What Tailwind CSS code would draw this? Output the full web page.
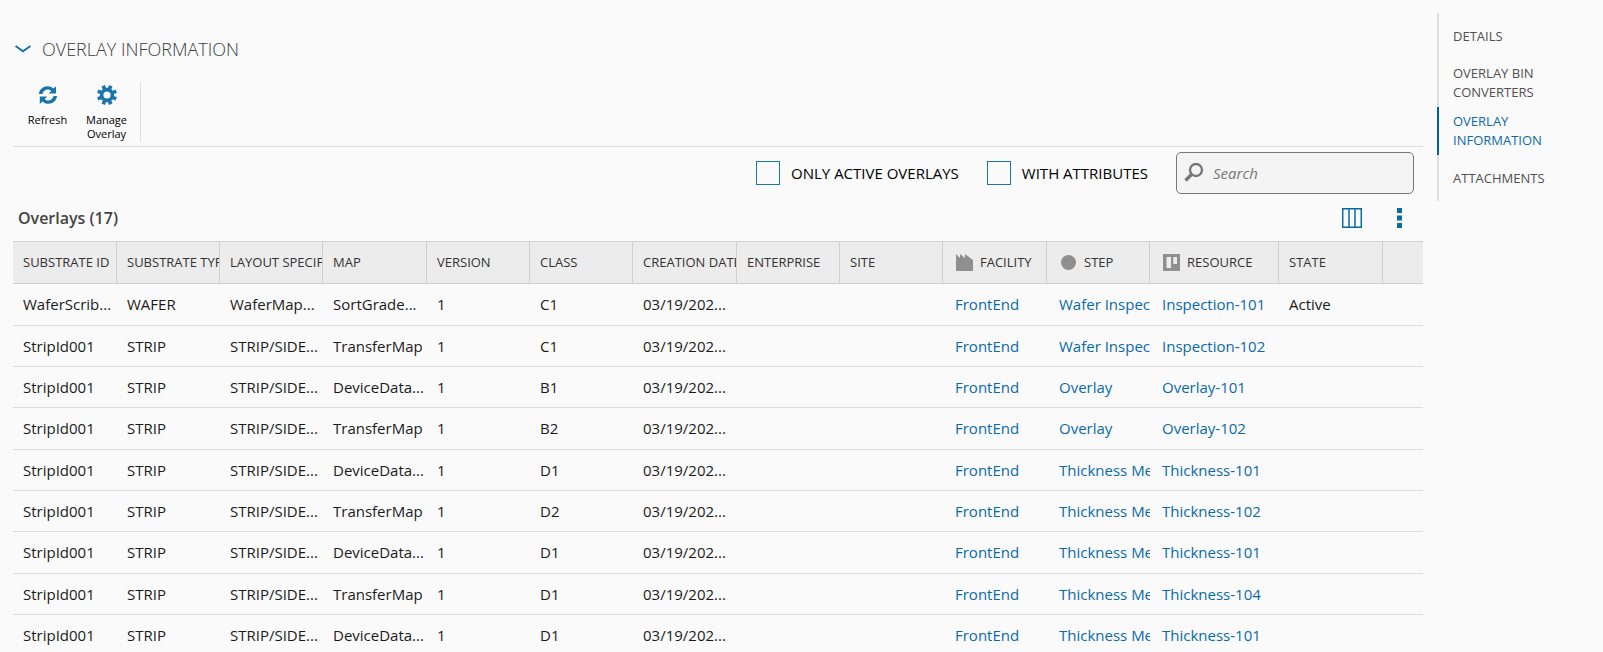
<!DOCTYPE html>
<html lang="en">

<head>
	<meta charset="UTF-8">
	<meta name="viewport" content="width=device-width, initial-scale=1.0">
	<title>Overlay Information</title>
	<script src="https://cdn.jsdelivr.net/npm/@tailwindcss/browser@4"></script>
</head>

<body class="h-screen overflow-hidden bg-[#fafafa] font-['Open_Sans','Noto_Sans',sans-serif] text-[15px] text-[#1a1a1a]">
	<div class="flex items-start pt-[13px] pl-[13px]">
		<main class="min-w-0 flex-1">
			<h1 class="mt-5">
				<button type="button" class="flex h-8 items-center gap-[11px] text-[18px] font-light text-[#3c3c3c]">
					<svg class="ml-[2px] w-4 h-2" viewBox="0 0 16 8" fill="none" stroke="#1272ac" stroke-width="2">
						<path d="M.5 1 8 6.3 15.5 1" />
					</svg>
					OVERLAY INFORMATION
				</button>
			</h1>

			<!-- toolbar -->
			<div class="mt-4 flex h-[66px] items-start border-b border-[#dedede] pt-px pl-[5px]">
				<div class="flex h-[60px] border-r border-[#dedede] pr-1">
					<button type="button" class="flex w-[59px] flex-col items-center pt-[3px] text-[11px] leading-[14px] text-black">
						<svg class="mb-2 size-5" viewBox="0 0 20 20" fill="#1b75ad">
							<path d="M1 9C1.3 4.500 5 1.300 9.600 1.300c2.300 0 4.300.8 5.900 2.300L18 1.200V8.600h-7.400l2.600-2.600C12.200 5 11 4.500 9.700 4.500 7.200 4.500 5.200 6.200 4.400 9z" />
							<path d="M19 11c-.3 4.500-4 7.700-8.600 7.700-2.300 0-4.300-.8-5.900-2.300L1.800 18.900v-7.500h7.400l-2.500 2.600c1 1 2.200 1.500 3.500 1.500 2.500 0 4.500-1.700 5.300-4.500z" />
						</svg>
						Refresh
					</button>
					<button type="button" class="flex w-[59px] flex-col items-center pt-[3px] text-[11px] leading-[14px] text-black">
						<svg class="mb-2 size-5" viewBox="0 0 20 20">
							<g stroke="#1b75ad" stroke-width="3.600">
								<path d="M10 0v20M0 10h20" transform="rotate(22.500 10 10)" />
								<path d="M10 0v20M0 10h20" transform="rotate(67.500 10 10)" />
							</g>
							<circle cx="10" cy="10" r="5.400" fill="#fafafa" stroke="#1b75ad" stroke-width="3.600" />
						</svg>
						<span>Manage<br>Overlay</span>
					</button>
				</div>
			</div>

			<!-- filters -->
			<div class="mt-[5px] flex h-[42px] items-center justify-end pr-[9px] text-black">
				<label class="mr-7 flex items-center gap-[11px]">
					<input type="checkbox" class="size-6 appearance-none border border-[#1b75ad] checked:bg-[#1b75ad]">
					ONLY ACTIVE OVERLAYS
				</label>
				<label class="mr-7 flex items-center gap-[11px]">
					<input type="checkbox" class="size-6 appearance-none border border-[#1b75ad] checked:bg-[#1b75ad]">
					WITH ATTRIBUTES
				</label>
				<label class="flex h-[42px] w-[238px] items-center gap-[9px] rounded-[5px] border border-[#777] bg-[#f4f4f4] px-[7px]">
					<svg class="size-5 shrink-0" viewBox="0 0 20 20" fill="none" stroke="#777">
						<circle cx="12" cy="7" r="6" stroke-width="2.400" />
						<path d="M8 11 1.500 17.500" stroke-width="3.400" />
					</svg>
					<input type="search" placeholder="Search" aria-label="Search" class="min-w-0 flex-1 outline-none placeholder:text-[#777] placeholder:italic">
				</label>
			</div>

			<div class="flex h-[47px] items-center pr-[21px] pl-[5px]">
				<h2 class="flex-1 text-[16px] font-semibold text-[#444]">Overlays (17)</h2>
				<button type="button" aria-label="Columns">
					<svg class="size-5" viewBox="0 0 20 20" fill="none" stroke="#0a6aa6" stroke-width="1.500">
						<path d="M.7.700h18.600v18.600H.7zM7 1v18M13 1v18" />
					</svg>
				</button>
				<button type="button" aria-label="More" class="ml-[35px]">
					<svg class="w-[5px] h-5" viewBox="0 0 5 20" fill="#0a6aa6">
						<path d="M0 0h5v5H0zM0 7.500h5v5H0zM0 15h5v5H0z" />
					</svg>
				</button>
			</div>

			<table class="w-full table-fixed border-separate border-spacing-0">
				<colgroup>
					<col class="w-[104px]">
					<col class="w-[103px]">
					<col class="w-[103px]">
					<col class="w-[104px]">
					<col class="w-[103px]">
					<col class="w-[103px]">
					<col class="w-[104px]">
					<col class="w-[103px]">
					<col class="w-[103px]">
					<col class="w-[104px]">
					<col class="w-[103px]">
					<col class="w-[129px]">
					<col class="w-[104px]">
					<col>
				</colgroup>
				<thead>
					<tr id="head" class="h-[43px] bg-[#ececec] text-left text-[13px] text-[#333]"></tr>
				</thead>
				<tbody id="rows"></tbody>
			</table>
		</main>

		<nav class="ml-[14px] w-[166px] shrink-0 text-[13px] leading-[19px] text-[#505050]">
			<a href="#" class="flex min-h-[46px] items-center border-l-2 border-[#dedede] py-[5px] pl-[14px]">DETAILS</a>
			<a href="#" class="flex min-h-[46px] items-center border-l-2 border-[#dedede] py-[5px] pl-[14px]">OVERLAY BIN<br>CONVERTERS</a>
			<a href="#" class="flex min-h-[46px] items-center border-l-2 border-[#00609c] py-[5px] pl-[14px] text-[#0a6aa6]">OVERLAY<br>INFORMATION</a>
			<a href="#" class="flex min-h-[46px] items-center border-l-2 border-[#dedede] py-[5px] pl-[14px]">ATTACHMENTS</a>
		</nav>
	</div>

	<script type="text/javascript">
		const icons = {
			FACILITY: '<path d="M0 17V0l4 4V0l5 4V0l8 6v11z"/>',
			STEP: '<circle cx="8.500" cy="8.500" r="7.500"/>',
			RESOURCE: '<path fill-rule="evenodd" d="M0 0h17v17H0zM3.500 3v11H8V3zM10.300 3v7h3.700V3z"/>'
		}
		const columns = ['SUBSTRATE ID', 'SUBSTRATE TYPE', 'LAYOUT SPECIFICATION', 'MAP', 'VERSION', 'CLASS', 'CREATION DATE',
			'ENTERPRISE', 'SITE', 'FACILITY', 'STEP', 'RESOURCE', 'STATE', '']

		// id, type, layout, map, class, step, resource, state
		const overlays = [
			['WaferScrib...', 'WAFER', 'WaferMap...', 'SortGrade...', 'C1', 'Wafer Inspection', 'Inspection-101', 'Active'],
			['StripId001', 'STRIP', 'STRIP/SIDE...', 'TransferMap', 'C1', 'Wafer Inspection', 'Inspection-102', ''],
			['StripId001', 'STRIP', 'STRIP/SIDE...', 'DeviceData...', 'B1', 'Overlay', 'Overlay-101', ''],
			['StripId001', 'STRIP', 'STRIP/SIDE...', 'TransferMap', 'B2', 'Overlay', 'Overlay-102', ''],
			['StripId001', 'STRIP', 'STRIP/SIDE...', 'DeviceData...', 'D1', 'Thickness Measurement', 'Thickness-101', ''],
			['StripId001', 'STRIP', 'STRIP/SIDE...', 'TransferMap', 'D2', 'Thickness Measurement', 'Thickness-102', ''],
			['StripId001', 'STRIP', 'STRIP/SIDE...', 'DeviceData...', 'D1', 'Thickness Measurement', 'Thickness-101', ''],
			['StripId001', 'STRIP', 'STRIP/SIDE...', 'TransferMap', 'D1', 'Thickness Measurement', 'Thickness-104', ''],
			['StripId001', 'STRIP', 'STRIP/SIDE...', 'DeviceData...', 'D1', 'Thickness Measurement', 'Thickness-101', '']
		]

		document.getElementById('head').innerHTML = columns.map(name => {
			const icon = icons[name]
				? '<svg class="mr-[7px] ml-[3px] inline size-[17px] align-[-4px]" viewBox="0 0 17 17" fill="#8f8f8f">' + icons[name] + '</svg>'
				: ''
			return '<th scope="col" class="overflow-hidden border-y border-r border-[#d0d0d0] p-0 pl-[10px] font-normal whitespace-nowrap last:border-r-0">' + icon + name + '</th>'
		}).join('')

		const cell = text => '<td class="overflow-hidden border-b border-[#dedede] p-0 pl-[10px] whitespace-nowrap">' + text + '</td>'
		const linkCell = text => '<td class="overflow-hidden border-b border-[#dedede] p-0 pl-3 whitespace-nowrap text-[#0a6aa6]"><a href="#">' + text + '</a></td>'

		document.getElementById('rows').innerHTML = overlays.map(([id, type, layout, map, cls, step, resource, state]) =>
			'<tr class="h-[41px] nth-[3n+1]:h-[42px]">' +
			[id, type, layout, map, '1', cls, '03/19/202...', '', ''].map(cell).join('') +
			['FrontEnd', step, resource].map(linkCell).join('') +
			[state, ''].map(cell).join('') +
			'</tr>').join('')
	</script>
</body>

</html>
